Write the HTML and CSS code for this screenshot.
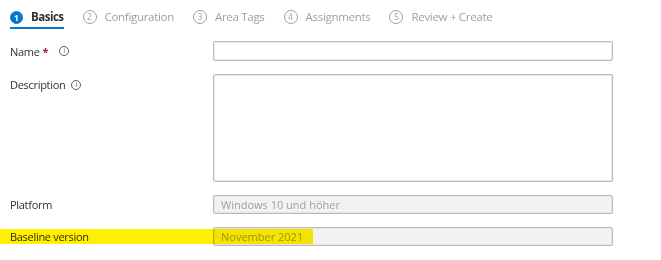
FILE: index.html
```
<!DOCTYPE html>
<html lang="de">
<head>
  <meta charset="UTF-8">
  <title>Create profile</title>
  <link rel="stylesheet" href="styles.css">
</head>
<body>
  <div class="wizard">
    <!-- Steps -->
    <div class="steps">
      <div class="step active"><span class="num">1</span><span class="label">Basics</span></div>
      <div class="step"><span class="num">2</span><span class="label">Configuration</span></div>
      <div class="step"><span class="num">3</span><span class="label">Area Tags</span></div>
      <div class="step"><span class="num">4</span><span class="label">Assignments</span></div>
      <div class="step"><span class="num">5</span><span class="label">Review + Create</span></div>
    </div>

    <!-- Form -->
    <div class="form">
      <div class="row">
        <label class="field-label">Name <span class="req">*</span> <span class="info">i</span></label>
        <div class="field"><input type="text" class="input"></div>
      </div>
      <div class="row top">
        <label class="field-label">Description <span class="info">i</span></label>
        <div class="field"><textarea class="input area"></textarea></div>
      </div>
      <div class="row">
        <label class="field-label">Platform</label>
        <div class="field"><div class="input disabled">Windows 10 und höher</div></div>
      </div>
      <div class="row marked">
        <label class="field-label">Baseline version</label>
        <div class="field"><div class="input disabled">November 2021</div></div>
        <span class="highlight"></span>
      </div>
    </div>
  </div>
</body>
</html>
```

FILE: styles.css
```
* {
  margin: 0;
  padding: 0;
  box-sizing: border-box;
}
body {
  background: #fff;
  color: #323130;
  font-family: "Open Sans", "Noto Sans", sans-serif;
  font-size: 11px;
}
.wizard {
  width: 661px;
  height: 260px;
  overflow: hidden;
}
.steps {
  display: flex;
  gap: 19px;
  padding: 9px 0 0 10px;
  height: 30px;
}
.step {
  display: flex;
  align-items: flex-start;
  gap: 8px;
  height: 21px;
  color: #a19f9d;
  font-size: 11.5px;
  line-height: 15px;
  letter-spacing: -0.3px;
}
.step .num {
  width: 14px;
  height: 14px;
  margin-top: 1px;
  border: 1px solid #a19f9d;
  border-radius: 50%;
  font-size: 8.5px;
  line-height: 12px;
  text-align: center;
  letter-spacing: 0;
}
.step.active {
  color: #323130;
  font-weight: 700;
  height: 20px;
  letter-spacing: -0.5px;
  border-bottom: 2px solid #0078d4;
}
.step.active .num {
  background: #0078d4;
  border-color: #0078d4;
  color: #fff;
  width: 13px;
  height: 13px;
  margin-top: 2px;
  line-height: 12px;
}
.form {
  display: flex;
  flex-direction: column;
  gap: 13px;
  padding: 11px 0 0 10px;
}
.row {
  display: flex;
  align-items: center;
  position: relative;
}
.row.top {
  align-items: flex-start;
}
.row.top .field-label {
  padding-top: 3px;
}
.field-label {
  width: 203px;
  display: flex;
  align-items: center;
  letter-spacing: -0.3px;
}
.req {
  color: #a4262c;
  font-weight: 700;
  margin: 0 5px 0 3px;
}
.info {
  display: inline-block;
  width: 10px;
  height: 10px;
  margin-left: 6px;
  border: 1px solid #605e5c;
  border-radius: 50%;
  font-size: 7px;
  line-height: 8px;
  text-align: center;
  color: #605e5c;
  letter-spacing: 0;
  font-family: "DejaVu Sans", sans-serif;
}
.field {
  width: 400px;
}
.input {
  display: block;
  width: 100%;
  height: 20px;
  border: 1px solid #bdbbb9;
  border-radius: 2px;
  background: #fff;
  font: inherit;
  color: #a19f9d;
  padding: 0 7px;
  line-height: 18px;
  box-shadow: inset 0 0 0 0.5px #d8d6d4;
}
.input.area {
  height: 108px;
  resize: none;
}
.input.disabled {
  background: #f3f2f1;
  height: 19px;
  line-height: 17px;
}
.highlight {
  position: absolute;
  left: -10px;
  top: 2px;
  width: 313px;
  height: 15px;
  background: #fff000;
  mix-blend-mode: multiply;
}
```
